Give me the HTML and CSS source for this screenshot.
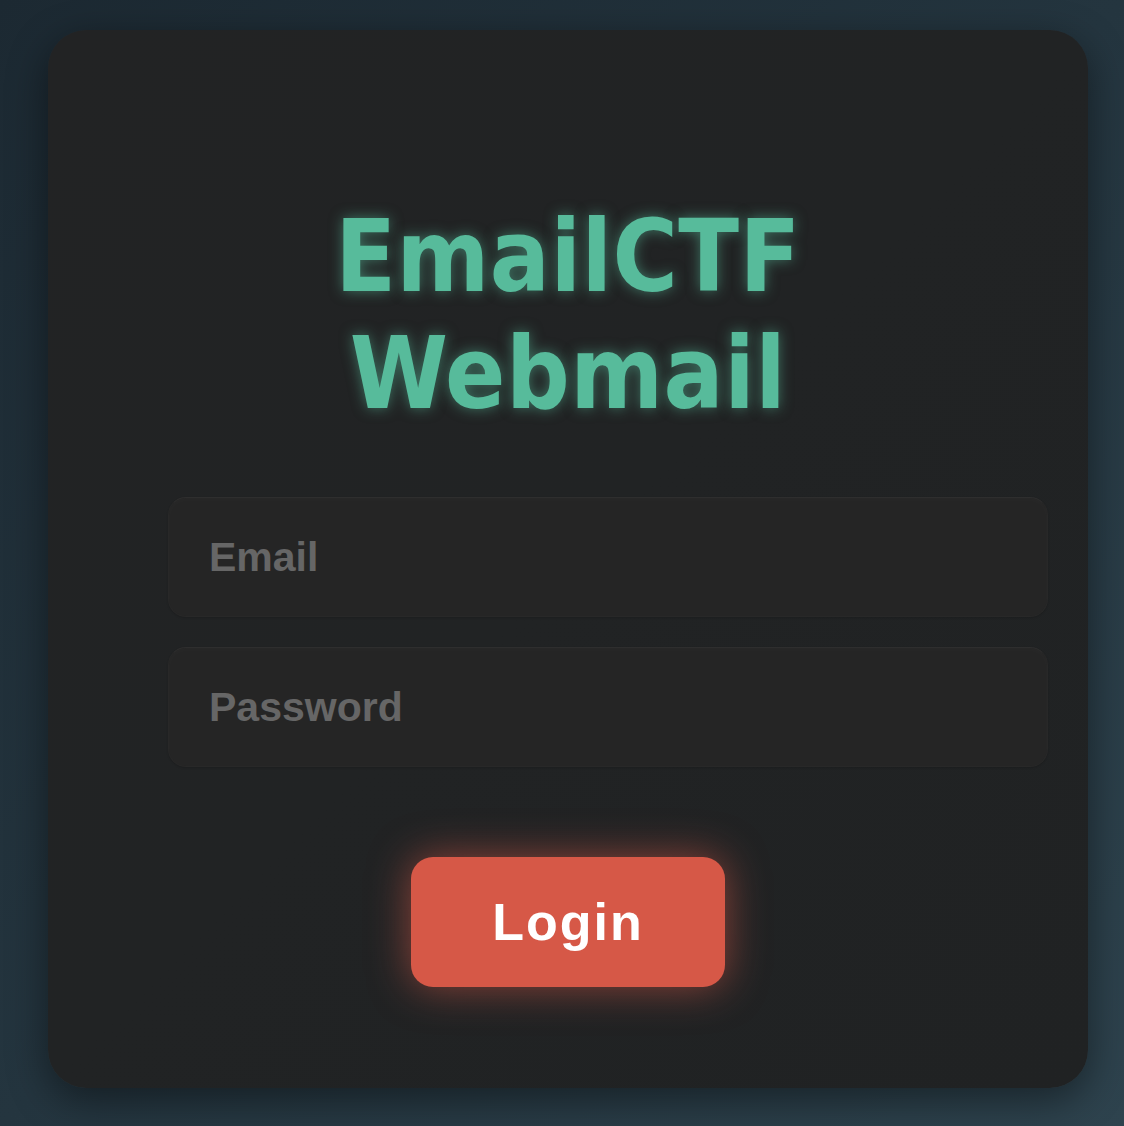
FILE: index.html
```html
<!DOCTYPE html>
<html lang="en">
<head>
<meta charset="utf-8">
<title>EmailCTF Webmail</title>
<link rel="stylesheet" href="styles.css">
</head>
<body>
<main class="card">
  <h1 class="title">EmailCTF<br>Webmail</h1>
  <form class="form">
    <input class="field" type="email" placeholder="Email">
    <input class="field" type="password" placeholder="Password">
    <button class="btn" type="button">Login</button>
  </form>
</main>
</body>
</html>
```
FILE: styles.css
```css
html, body {
  margin: 0;
  padding: 0;
}
body {
  min-height: 1126px;
  background: linear-gradient(135deg, #1c2932 0%, #24353f 50%, #2e434e 100%);
  font-family: "Liberation Sans", Arial, sans-serif;
  padding: 30px 36px 38px 48px;
  box-sizing: border-box;
}
.card {
  box-sizing: border-box;
  height: 1058px;
  border-radius: 38px;
  background: linear-gradient(135deg, #222324 0%, #212324 50%, #202223 100%);
  box-shadow: 0 12px 40px rgba(0, 0, 0, 0.45);
  padding: 168px 120px 0;
}
.title {
  margin: 0;
  text-align: center;
  font-family: "DejaVu Sans Condensed", "DejaVu Sans", sans-serif;
  font-stretch: condensed;
  font-weight: 700;
  font-size: 99px;
  line-height: 117px;
  letter-spacing: 0.5px;
  color: #57bb9b;
  text-shadow: 0 0 14px rgba(87, 187, 155, 0.55);
}
.form {
  margin-top: 65px;
  display: flex;
  flex-direction: column;
  align-items: flex-start;
}
.field {
  box-sizing: content-box;
  width: calc(100% - 2px);
  height: 118px;
  padding: 0 40px;
  margin: 0 0 30px 0;
  border: 1px solid #282828;
  border-top-color: #2e2e2e;
  border-radius: 18px;
  background: #252525;
  box-shadow: inset 0 2px 6px rgba(255, 255, 255, 0.02), 0 1px 2px rgba(0, 0, 0, 0.15);
  font-family: "Liberation Sans", Arial, sans-serif;
  font-weight: 700;
  font-size: 41px;
  color: #cccccc;
  outline: none;
}
.field::placeholder {
  color: #666666;
  opacity: 1;
}
.btn {
  align-self: center;
  margin-top: 60px;
  width: 314px;
  height: 130px;
  border: none;
  border-radius: 22px;
  background: #d65847;
  color: #ffffff;
  font-family: "Liberation Sans", Arial, sans-serif;
  font-weight: 700;
  font-size: 52px;
  letter-spacing: 2px;
  box-shadow: 0 0 40px rgba(214, 88, 71, 0.6);
  cursor: pointer;
}
```
